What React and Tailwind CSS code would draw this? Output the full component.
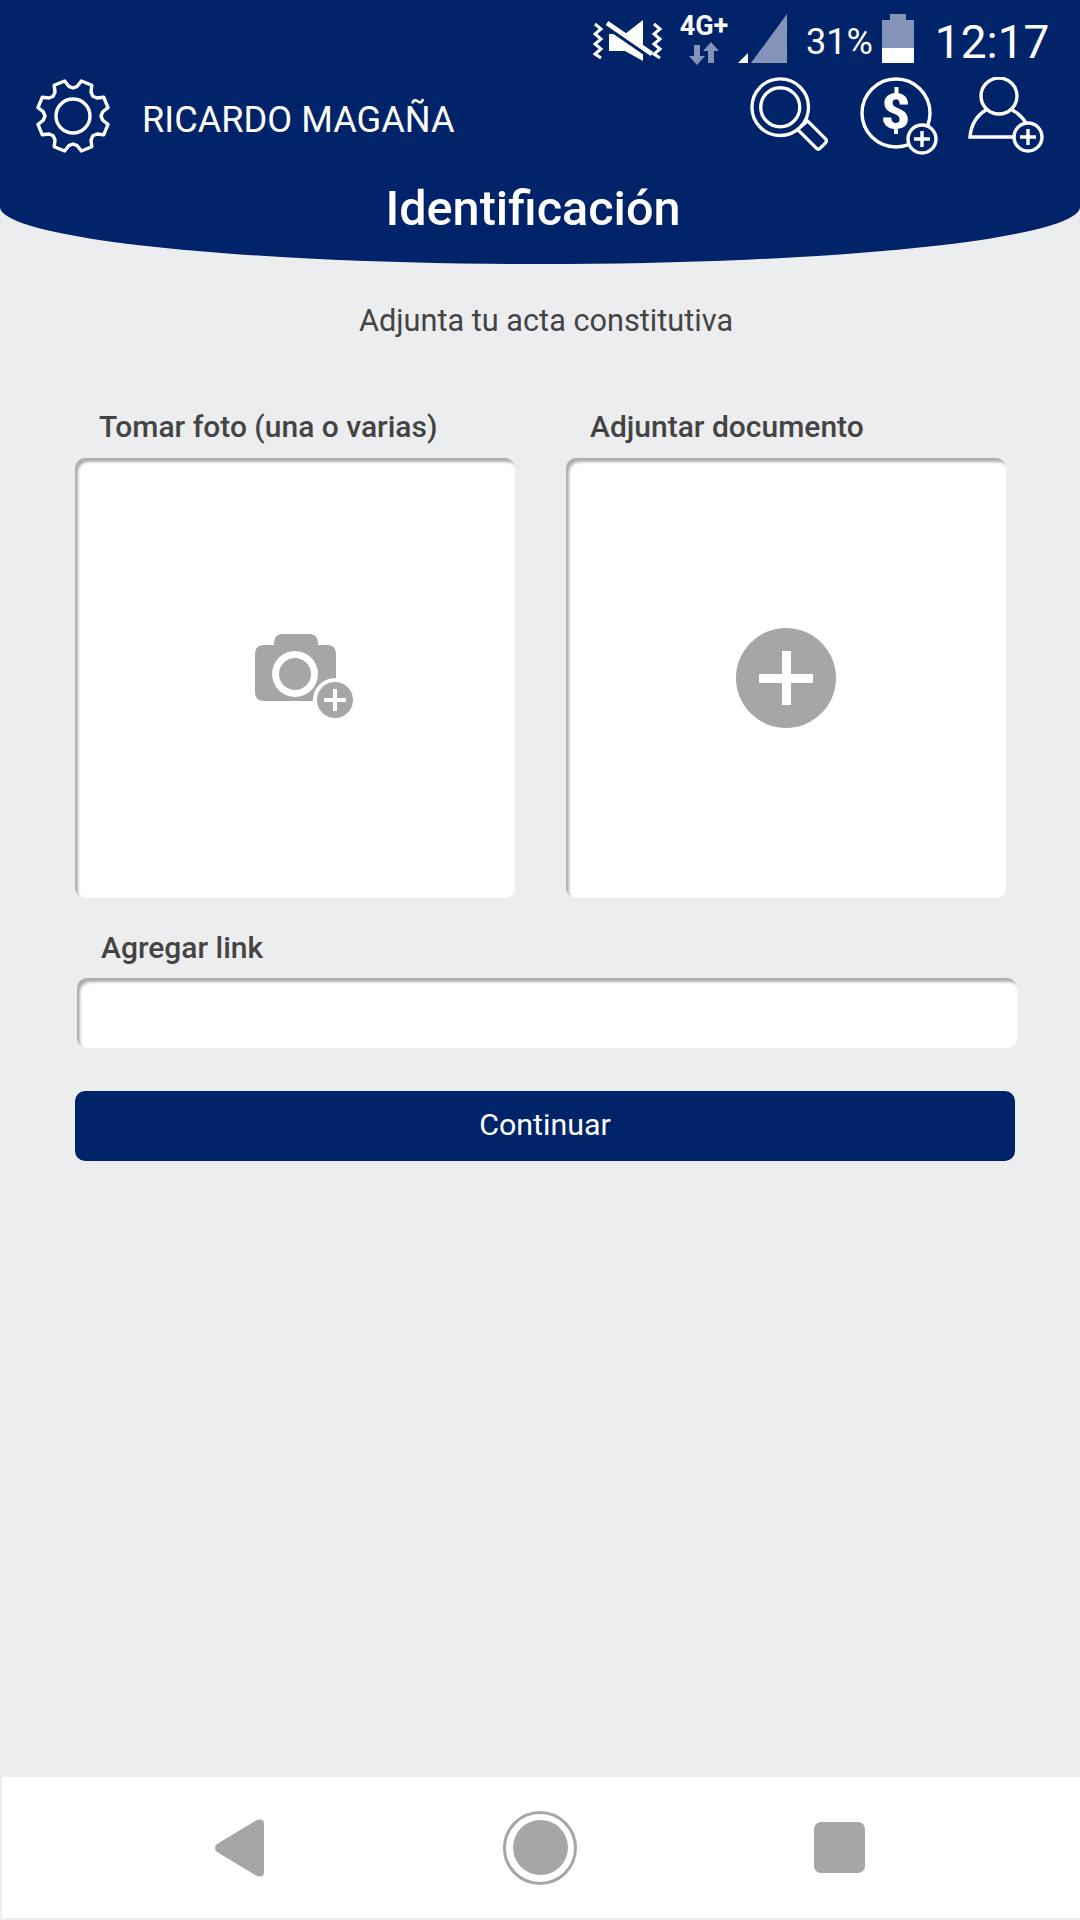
import React from 'react';

const NAVY = '#012369';

// 8 tooth gear outline, notch on top like the reference
const gearPath = (() => {
  const cx = 38, cy = 38, out = 36, inn = 27, n = 8;
  const pt = (r, a) => `${(cx + r * Math.cos(a)).toFixed(2)} ${(cy + r * Math.sin(a)).toFixed(2)}`;
  let d = '';
  for (let i = 0; i < n; i++) {
    const a = -Math.PI / 2 + (i * 2 * Math.PI) / n;
    const s = (2 * Math.PI) / n;
    d += `${i === 0 ? 'M' : 'L'}${pt(inn + 1, a)} `;
    d += `L${pt(inn + 3, a + s * 0.18)} L${pt(out, a + s * 0.3)} L${pt(out, a + s * 0.7)} L${pt(inn + 3, a + s * 0.82)} `;
  }
  return d + 'Z';
})();

function Gear() {
  return (
    <svg width="76" height="76" viewBox="0 0 76 76" fill="none" stroke="#fff" strokeWidth="3.4" strokeLinejoin="round">
      <path d={gearPath} />
      <circle cx="38" cy="38" r="17" />
    </svg>
  );
}

function MuteVibrate() {
  return (
    <svg width="70" height="44" viewBox="0 -2 70 44" fill="none">
      <path d="M16 13h16L50 -1v41L32 30H16z" fill="#fff" />
      <path d="M14 6 L56 35" stroke={NAVY} strokeWidth="4" />
      <path d="M14 2 L59 33" stroke="#fff" strokeWidth="4.6" />
      <path d="M2 3l6 5-6 5 6 5-6 5 6 5-6 5 6 4" stroke="#fff" strokeWidth="3" />
      <path d="M61 3l6 5-6 5 6 5-6 5 6 5-6 5 6 4" stroke="#fff" strokeWidth="3" />
    </svg>
  );
}

function Arrows() {
  return (
    <svg width="30" height="24" viewBox="0 0 30 24" fill="#8493b8">
      <path d="M5 3h6v11h5l-8 9-8-9h5z" />
      <path d="M19 21h6V9h5l-8-9-8 9h5z" />
    </svg>
  );
}

function Signal() {
  return (
    <svg width="50" height="50" viewBox="0 0 50 50">
      <path d="M13 49 L49 0 V49 Z" fill="#8493b8" />
      <path d="M0 49 L10 39 V49 Z" fill="#fff" />
    </svg>
  );
}

function Search() {
  return (
    <svg width="78" height="78" viewBox="0 0 80 80" fill="none" stroke="#fff" strokeWidth="3.4" strokeLinejoin="round">
      <circle cx="31" cy="31" r="29" />
      <circle cx="31" cy="31" r="20" />
      <path d="M52 51 L59 45 L78 64 Q79 66 77 68 L72 73 Q70 75 68 73 L49 54" />
    </svg>
  );
}

function Badge({ cx, cy }) {
  return (
    <g>
      <circle cx={cx} cy={cy} r="14" fill={NAVY} stroke="#fff" strokeWidth="3.4" />
      <path d={`M${cx - 8} ${cy}h16M${cx} ${cy - 8}v16`} stroke="#fff" strokeWidth="3.4" />
    </g>
  );
}

function Person() {
  return (
    <svg width="80" height="80" viewBox="0 0 80 80" fill="none" stroke="#fff" strokeWidth="3.4">
      <circle cx="31" cy="19" r="18" />
      <path d="M18 33 C8 39 3 48 2 60 H52" />
      <path d="M44 33 C50 36 55 41 58 46" />
      <Badge cx="60" cy="60" />
    </svg>
  );
}

function Camera() {
  return (
    <svg width="104" height="90" viewBox="0 0 104 90">
      <path d="M9 13h10v-2q0-9 9-9h26q9 0 9 9v2h9q9 0 9 9v36q0 11-9 11H9q-9 0-9-9V22q0-9 9-9z" fill="#a6a6a6" />
      <circle cx="40" cy="42" r="23" fill="#fff" />
      <circle cx="40" cy="42" r="16" fill="#a6a6a6" />
      <circle cx="80" cy="68" r="22" fill="#fff" />
      <circle cx="80" cy="68" r="18" fill="#a6a6a6" />
      <path d="M69 68h22M80 57v22" stroke="#fff" strokeWidth="4" />
    </svg>
  );
}

function Label({ className, children }) {
  return <div className={`text-[#444444] text-[30px] leading-none font-medium ${className}`}>{children}</div>;
}

const inset = 'bg-white rounded-[10px] shadow-[inset_3px_4px_3px_rgba(0,0,0,0.32)]';

export default function App() {
  return (
    <div className="w-[1080px] h-[1920px] bg-[#ecedef] flex flex-col font-['Roboto',sans-serif]">
      {/* Header */}
      <div className="h-[264px] bg-[#012369] rounded-b-[50%_57px] text-white shrink-0">
        <div className="flex items-start pt-[14px] pl-[593px] h-[78px]">
          <div className="mt-[5px]"><MuteVibrate /></div>
          <div className="ml-[14px] w-[54px] flex flex-col items-center">
            <div className="text-[27px] leading-[24px] font-bold whitespace-nowrap">4G+</div>
            <div className="mt-[4px]"><Arrows /></div>
          </div>
          <div className="ml-[7px]"><Signal /></div>
          <div className="ml-[18px] mt-[8px] text-[36px] leading-[40px]">31%</div>
          <div className="ml-[9px] w-[32px] flex flex-col items-center">
            <div className="w-[16px] h-[6px] bg-[#8493b8]" />
            <div className="w-[32px] h-[28px] bg-[#8493b8]" />
            <div className="w-[32px] h-[15px] bg-white" />
          </div>
          <div className="ml-[21px] text-[46px] leading-[56px]">12:17</div>
        </div>

        <div className="flex items-center h-[76px] pl-[35px]">
          <Gear />
          <div className="ml-[31px] mt-[8px] text-[36.2px] leading-none">RICARDO MAGAÑA</div>
          <div className="ml-auto flex items-start pr-[32px] mt-[2px]">
            <Search />
            <div className="relative ml-[32px] w-[80px] h-[80px]">
              <svg width="80" height="80" viewBox="0 0 80 80" fill="none" stroke="#fff" strokeWidth="3.4">
                <circle cx="36" cy="36" r="34" />
                <Badge cx="62" cy="62" />
              </svg>
              <div className="absolute left-[21px] top-[9px] text-[50px] leading-[52px] font-black">$</div>
            </div>
            <div className="ml-[28px] w-[80px]"><Person /></div>
          </div>
        </div>

        <div className="mt-[27px] text-center text-[48.6px] leading-[56px] font-medium pr-[14px]">Identificación</div>
      </div>

      {/* Content */}
      <div className="flex-1 pl-[75px] w-[1017px]">
        <div className="mt-[40px] text-center text-[#444444] text-[30.7px] leading-[34px] w-[942px]">Adjunta tu acta constitutiva</div>

        <div className="mt-[74px] flex gap-[51px]">
          <div className="w-[440px]">
            <Label className="ml-[24px] h-[46px]">Tomar foto (una o varias)</Label>
            <div className={`${inset} h-[440px] flex items-center justify-center`}>
              <div className="ml-[23px] mt-[-2px]"><Camera /></div>
            </div>
          </div>
          <div className="w-[440px]">
            <Label className="ml-[24px] h-[46px]">Adjuntar documento</Label>
            <div className={`${inset} h-[440px] flex items-center justify-center`}>
              <div className="w-[100px] h-[100px] rounded-full bg-[#a6a6a6] flex items-center justify-center relative">
                <div className="w-[54px] h-[9px] bg-white" />
                <div className="absolute w-[9px] h-[54px] bg-white" />
              </div>
            </div>
          </div>
        </div>

        <Label className="ml-[26px] mt-[35px]">Agregar link</Label>
        <div className={`${inset} ml-[2px] w-[940px] h-[70px] mt-[15px]`} />

        <button className="mt-[43px] pb-[2px] w-[940px] h-[70px] bg-[#012369] rounded-[10px] text-white text-[30.4px] block">Continuar</button>
      </div>

      {/* Android nav bar */}
      <div className="h-[141px] mb-[2px] ml-[2px] bg-white shrink-0 flex items-center pl-[212px]">
        <svg width="52" height="60" viewBox="0 0 52 60" fill="#a6a6a6">
          <path d="M3 26 L43 2 Q50 0 50 6 V54 Q50 60 43 58 L3 34 Q-1 30 3 26z" />
        </svg>
        <div className="ml-[237px] w-[74px] h-[74px] rounded-full border-[3px] border-[#a6a6a6] flex items-center justify-center">
          <div className="w-[55px] h-[55px] rounded-full bg-[#a6a6a6]" />
        </div>
        <div className="ml-[237px] w-[51px] h-[51px] rounded-[7px] bg-[#a6a6a6]" />
      </div>
    </div>
  );
}
